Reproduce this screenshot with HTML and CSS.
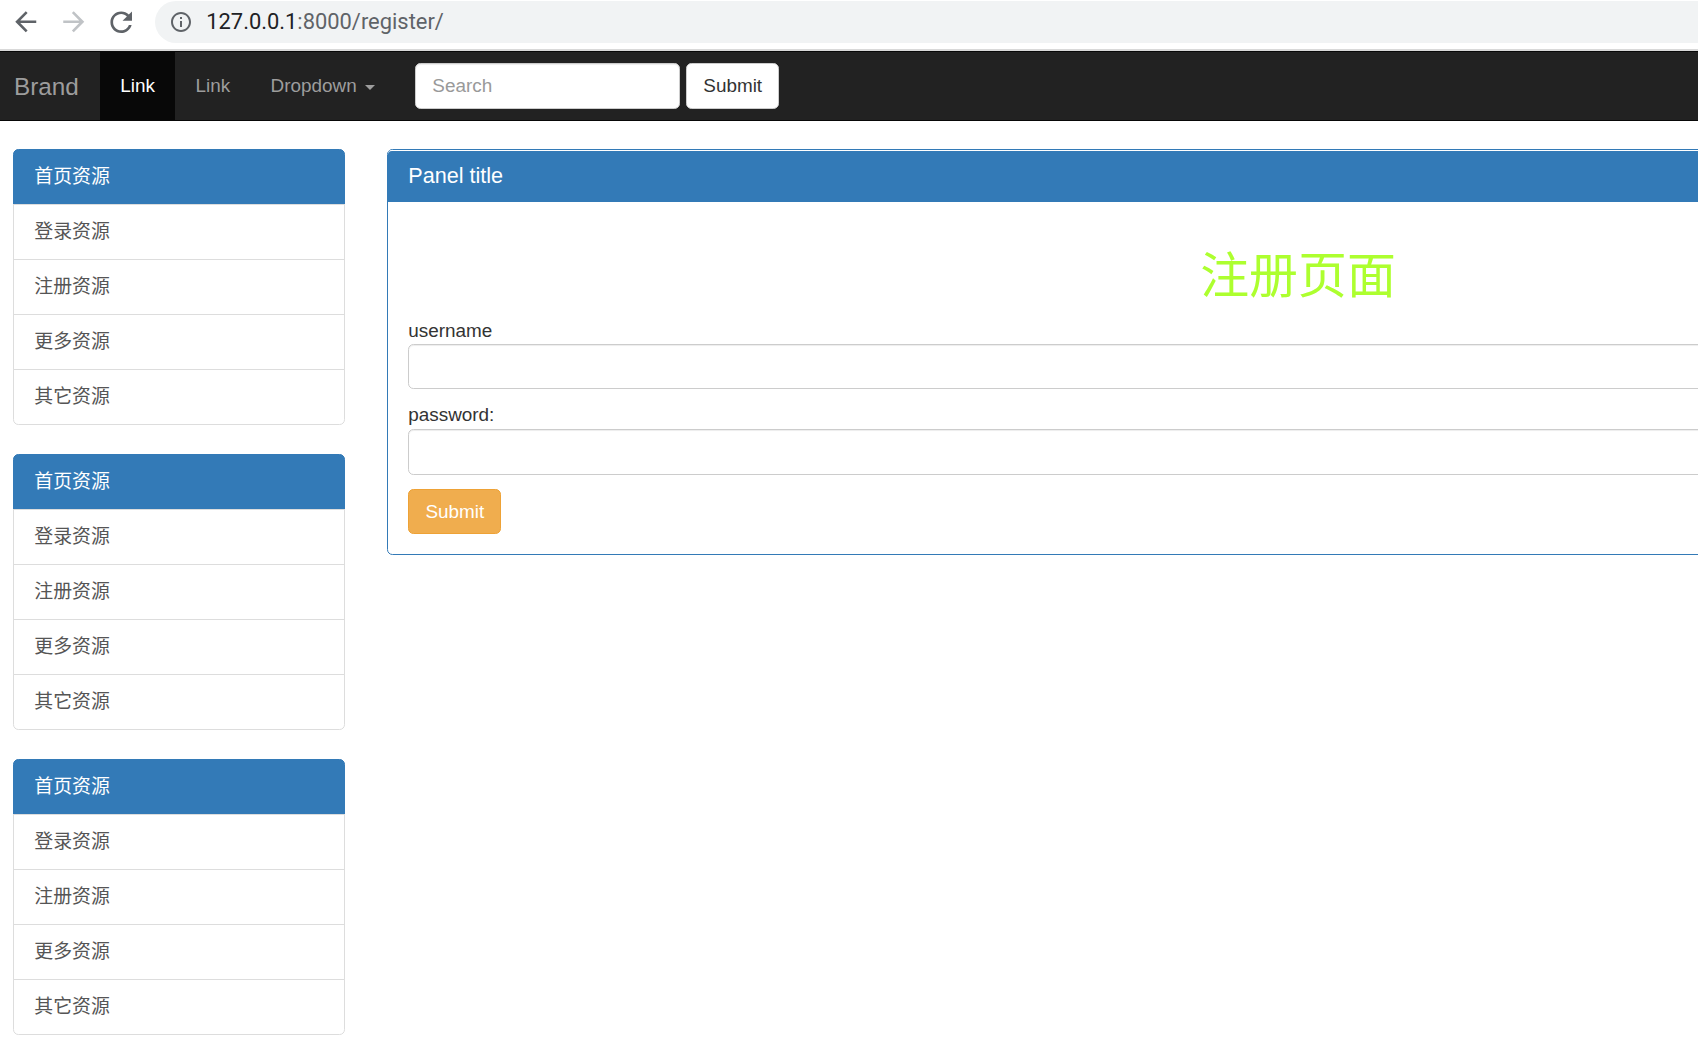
FILE: index.html
```html
<!DOCTYPE html>
<html lang="zh">
<head>
<meta charset="utf-8">
<title>register</title>
<link rel="stylesheet" href="styles.css">
</head>
<body>
<div class="chrome">
  <div class="chrome-row">
    <svg class="ic ic-back" viewBox="0 0 24 24"><path d="M20 11H7.83l5.59-5.59L12 4l-8 8 8 8 1.41-1.41L7.83 13H20v-2z"/></svg>
    <svg class="ic ic-fwd" viewBox="0 0 24 24"><path d="M12 4l-1.41 1.41L16.17 11H4v2h12.17l-5.58 5.59L12 20l8-8z"/></svg>
    <svg class="ic ic-reload" viewBox="0 0 24 24"><path d="M17.65 6.35C16.2 4.9 14.21 4 12 4c-4.42 0-7.99 3.58-7.99 8s3.57 8 7.99 8c3.73 0 6.84-2.55 7.730-6h-2.08c-.82 2.33-3.04 4-5.65 4-3.31 0-6-2.69-6-6s2.69-6 6-6c1.66 0 3.14.69 4.22 1.78L13 11h7V4l-2.35 2.35z"/></svg>
    <div class="omnibox">
      <svg class="ic-info" viewBox="0 0 24 24"><path d="M11 7h2v2h-2zm0 4h2v6h-2zm1-9C6.48 2 2 6.48 2 12s4.48 10 10 10 10-4.48 10-10S17.52 2 12 2zm0 18c-4.41 0-8-3.59-8-8s3.59-8 8-8 8 3.59 8 8-3.59 8-8 8z"/></svg>
      <span class="url"><span class="host">127.0.0.1</span>:8000/register/</span>
    </div>
  </div>
</div>

<nav class="navbar">
  <a class="brand" href="#">Brand</a>
  <ul class="nav">
    <li><a class="active" href="#">Link</a></li>
    <li><a href="#">Link</a></li>
    <li><a href="#">Dropdown <span class="caret"></span></a></li>
  </ul>
  <form class="navbar-form">
    <input class="search" type="text" placeholder="Search">
    <button class="btn-default" type="button">Submit</button>
  </form>
</nav>

<div class="page">
  <aside class="sidebar">
    <div class="list-group">
      <a class="item active" href="#">首页资源</a>
      <a class="item" href="#">登录资源</a>
      <a class="item" href="#">注册资源</a>
      <a class="item" href="#">更多资源</a>
      <a class="item" href="#">其它资源</a>
    </div>
    <div class="list-group">
      <a class="item active" href="#">首页资源</a>
      <a class="item" href="#">登录资源</a>
      <a class="item" href="#">注册资源</a>
      <a class="item" href="#">更多资源</a>
      <a class="item" href="#">其它资源</a>
    </div>
    <div class="list-group">
      <a class="item active" href="#">首页资源</a>
      <a class="item" href="#">登录资源</a>
      <a class="item" href="#">注册资源</a>
      <a class="item" href="#">更多资源</a>
      <a class="item" href="#">其它资源</a>
    </div>
  </aside>

  <section class="panel">
    <div class="panel-heading">
      <h3 class="panel-title">Panel title</h3>
    </div>
    <div class="panel-body">
      <h1 class="page-title">注册页面</h1>
      <form class="reg-form">
        <label class="lbl">username</label>
        <input class="form-control fc-first" type="text">
        <label class="lbl">password:</label>
        <input class="form-control fc-last" type="password">
        <button class="btn-warning" type="button">Submit</button>
      </form>
    </div>
  </section>
</div>
</body>
</html>
```

FILE: styles.css
```css
html, body {
  margin: 0;
  padding: 0;
}
body {
  width: 1698px;
  height: 1054px;
  overflow: hidden;
  background: #fff;
  font-family: "Liberation Sans", "Noto Sans CJK SC", sans-serif;
  font-size: 18.9px;
  line-height: 27px;
  color: #333;
}

/* browser chrome */
.chrome {
  height: 49px;
  background: #fff;
  border-bottom: 2px solid #d9d9d9;
}
.chrome-row {
  height: 44px;
  display: flex;
  align-items: center;
}
.ic {
  width: 31.5px;
  height: 31.5px;
  flex-shrink: 0;
}
.ic-back {
  margin-left: 9.75px;
  fill: #5f6368;
}
.ic-fwd {
  margin-left: 16.3px;
  fill: #c0c3c6;
}
.ic-reload {
  width: 32.4px;
  height: 32.4px;
  margin-left: 16.3px;
  fill: #5f6368;
}
.omnibox {
  margin-left: 16.8px;
  flex: 1;
  height: 42px;
  background: #f1f3f4;
  border-radius: 21px 0 0 21px;
  display: flex;
  align-items: center;
}
.ic-info {
  width: 24px;
  height: 24px;
  margin-left: 14.7px;
  fill: #5f6368;
}
.url {
  margin-left: 13px;
  font-family: Roboto, "Liberation Sans", sans-serif;
  font-size: 21.9px;
  color: #5f6368;
  line-height: 1;
}
.host {
  color: #202124;
}

/* navbar */
.navbar {
  display: flex;
  align-items: flex-start;
  height: 67.5px;
  background: #222;
  border-top: 1px solid #080808;
  border-bottom: 1px solid #080808;
}
.brand {
  display: block;
  padding: 21px 21.2px 19.5px 14px;
  font-size: 24.3px;
  line-height: 27px;
  color: #9d9d9d;
  text-decoration: none;
}
.nav {
  display: flex;
  list-style: none;
  margin: 0;
  padding: 0;
}
.nav a {
  display: block;
  padding: 20.25px;
  line-height: 27px;
  color: #9d9d9d;
  text-decoration: none;
}
.nav a.active {
  background: #080808;
  color: #fff;
}
.caret {
  display: inline-block;
  width: 0;
  height: 0;
  margin-left: 2.7px;
  vertical-align: middle;
  border-top: 5.4px solid #9d9d9d;
  border-left: 5.4px solid transparent;
  border-right: 5.4px solid transparent;
}
.navbar-form {
  display: flex;
  margin: 10.8px 0 0 20.25px;
}
.search {
  box-sizing: border-box;
  width: 264.6px;
  height: 45.9px;
  padding: 8.1px 16.2px;
  font-family: "Liberation Sans", sans-serif;
  font-size: 18.9px;
  color: #555;
  background: #fff;
  border: 1px solid #ccc;
  border-radius: 5.4px;
  box-shadow: inset 0 1px 1px rgba(0,0,0,.075);
  outline: none;
}
.search::placeholder {
  color: #999;
}
.btn-default {
  box-sizing: border-box;
  margin-left: 6.4px;
  height: 45.9px;
  padding: 8.1px 16.2px;
  font-family: "Liberation Sans", sans-serif;
  font-size: 18.9px;
  line-height: 27px;
  color: #333;
  background: #fff;
  border: 1px solid #ccc;
  border-radius: 5.4px;
}

/* page layout */
.page {
  display: flex;
  align-items: flex-start;
  gap: 42px;
  margin-top: 28px;
  padding-left: 13px;
}
.sidebar {
  width: 332px;
  flex-shrink: 0;
  display: flex;
  flex-direction: column;
  gap: 29px;
}
.list-group {
  display: flex;
  flex-direction: column;
}
.item {
  display: block;
  padding: 13.5px 20.25px;
  line-height: 27px;
  color: #555;
  text-decoration: none;
  background: #fff;
  border: 1px solid #ddd;
  margin-bottom: -1px;
}
.item:first-child {
  border-radius: 5.4px 5.4px 0 0;
}
.item:last-child {
  margin-bottom: 0;
  border-radius: 0 0 5.4px 5.4px;
}
.item.active {
  background: #337ab7;
  border-color: #337ab7;
  color: #fff;
}

/* main panel */
.panel {
  width: 1822px;
  flex-shrink: 0;
  box-sizing: border-box;
  border: 1px solid #337ab7;
  border-radius: 5.4px;
  background: #fff;
}
.panel-heading {
  background: #337ab7;
  border-top: 1px solid #fff;
  border-bottom: 1px solid #337ab7;
  padding: 13.5px 20.25px;
  border-radius: 4px 4px 0 0;
}
.panel-title {
  margin: 0;
  font-size: 21.6px;
  line-height: 1.1;
  font-weight: normal;
  color: #fff;
}
.panel-body {
  padding: 20.25px;
}
.page-title {
  margin: 22px 0 18.5px;
  font-family: "Noto Sans CJK SC", sans-serif;
  font-size: 48.9px;
  line-height: 53.5px;
  font-weight: normal;
  text-align: center;
  color: #adff2f;
}
.reg-form {
  display: flex;
  flex-direction: column;
  align-items: flex-start;
}
.lbl {
  display: block;
  line-height: 27px;
  color: #333;
}
.form-control {
  box-sizing: border-box;
  display: block;
  width: 100%;
  height: 45.9px;
  padding: 8.1px 16.2px;
  font-size: 18.9px;
  background: #fff;
  border: 1px solid #ccc;
  border-radius: 5.4px;
  box-shadow: inset 0 1px 1px rgba(0,0,0,.075);
  margin: 0;
}
.fc-first {
  margin-bottom: 12px;
}
.fc-last {
  margin-top: 1px;
  margin-bottom: 13.5px;
}
.btn-warning {
  box-sizing: border-box;
  height: 45.4px;
  padding: 8.1px 16.2px;
  font-family: "Liberation Sans", sans-serif;
  font-size: 18.9px;
  line-height: 27px;
  color: #fff;
  background: #f0ad4e;
  border: 1px solid #eea236;
  border-radius: 5.4px;
}
```
